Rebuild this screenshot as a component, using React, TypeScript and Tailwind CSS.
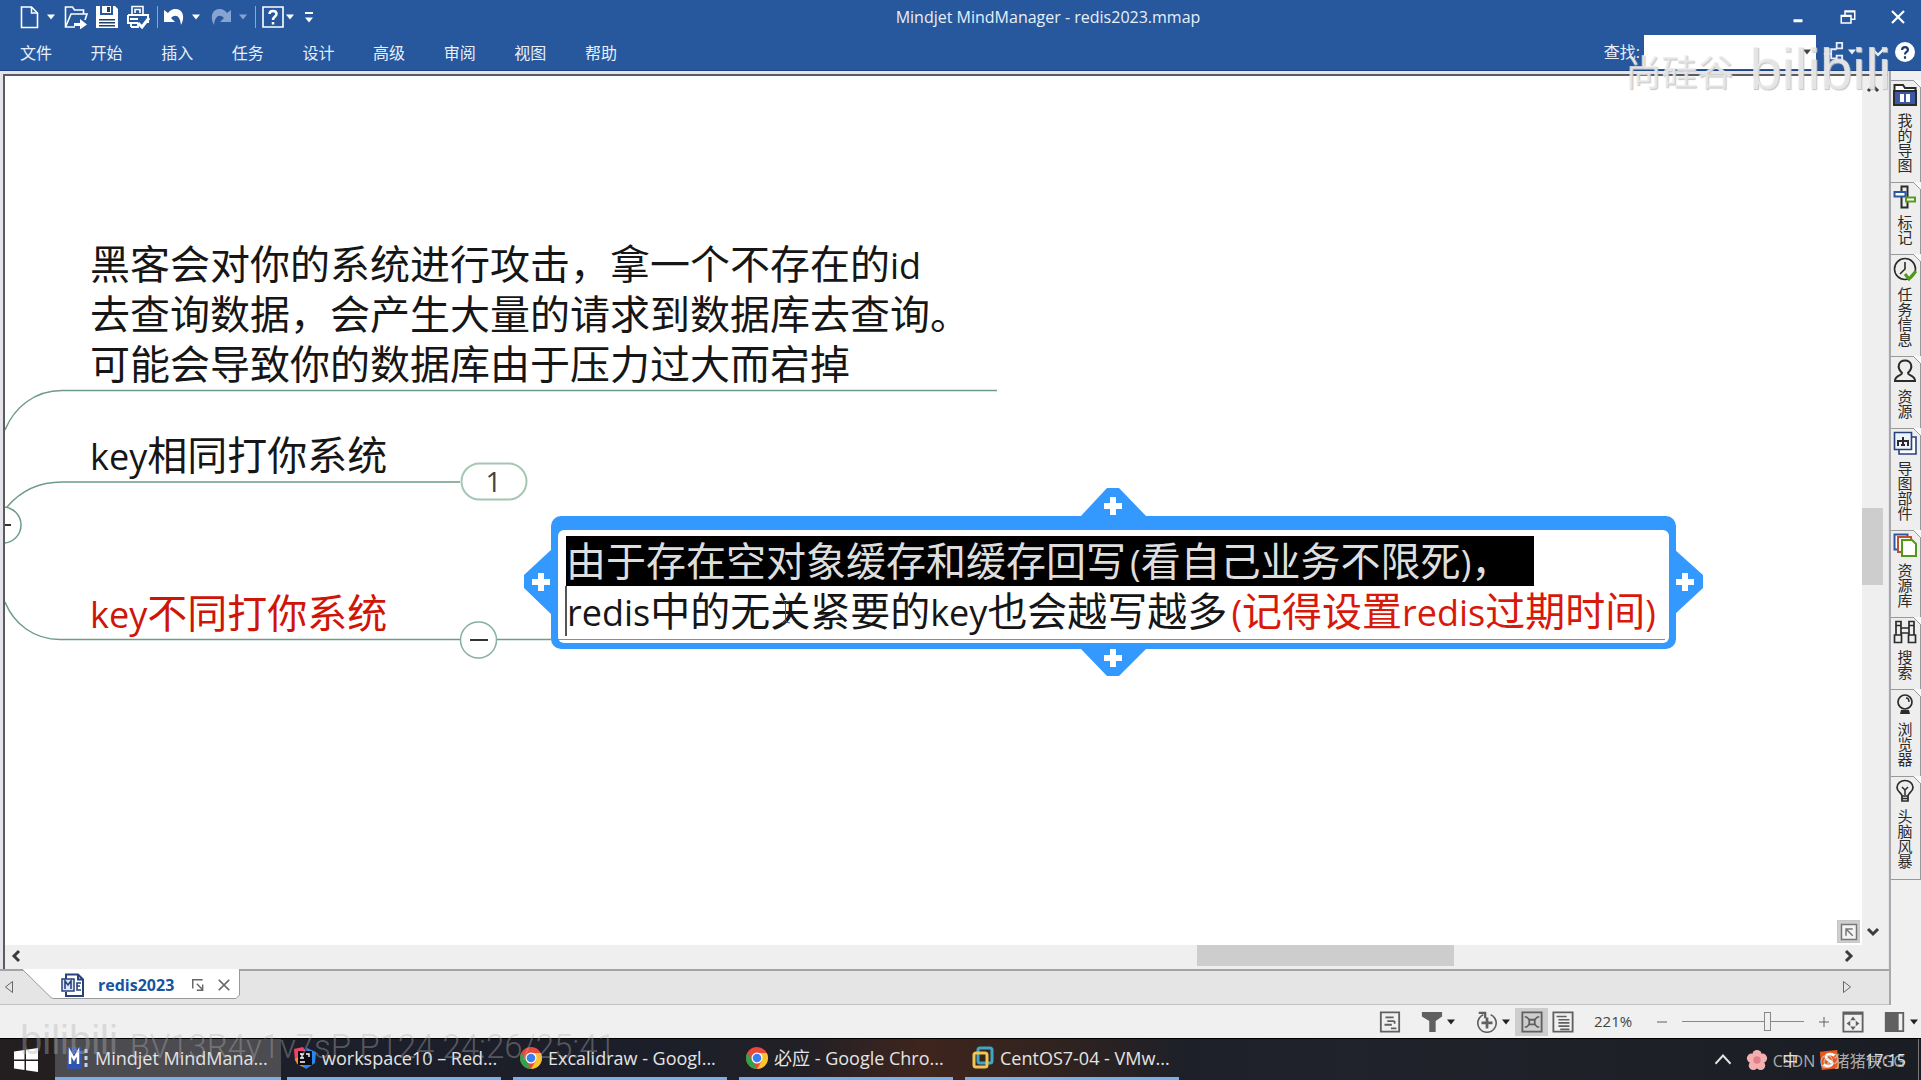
import type { ReactNode } from "react";

const MENUS = ["文件", "开始", "插入", "任务", "设计", "高级", "审阅", "视图", "帮助"];

const Svg = ({ children, size = 24, className = "" }: { children: ReactNode; size?: number; className?: string }) => (
    <svg width={size} height={size} viewBox="0 0 24 24" fill="none" stroke="currentColor" strokeWidth="2" className={className} aria-hidden="true">
        {children}
    </svg>
);

const Caret = ({ className = "" }: { className?: string }) => (
    <svg width="10" height="6" viewBox="0 0 10 6" className={className} aria-hidden="true">
        <path d="M1 0.5h8L5 5.5z" fill="currentColor" />
    </svg>
);

const Chevron = ({ d }: { d: string }) => (
    <svg width="14" height="14" viewBox="0 0 14 14" fill="none" stroke="#3c3c3c" strokeWidth="3" aria-hidden="true">
        <path d={d} />
    </svg>
);

const QuickBar = () => (
    <div className="flex w-[316px] shrink-0 items-center pl-[18px] text-white">
        <button aria-label="新建"><Svg><path d="M3.500 2h10l6 6v14.500h-16z" strokeWidth="1.600" /><path d="M13.500 2v6h6" strokeWidth="1.500" /></Svg></button>
        <button aria-label="新建选项" className="ml-1"><Caret /></button>
        <button aria-label="打开" className="ml-2">
            <Svg>
                <path d="M11 22H1.500V2h7l2 3h9v4" strokeWidth="1.600" />
                <path d="M2 21l5-12h16l-2 6" strokeWidth="1.600" />
                <path d="M10 18h6v-4l7 5.500-7 5V21h-6z" fill="currentColor" stroke="none" />
            </Svg>
        </button>
        <button aria-label="保存" className="ml-[7px]">
            <Svg>
                <path d="M1 1h19l3 3v19H1z" fill="currentColor" stroke="none" />
                <path d="M5 1h13v9H5z" fill="#27579c" stroke="none" />
                <path d="M7 1h9v7H7z" fill="currentColor" stroke="none" />
                <path d="M12 2h3v5h-3zM4 14h16v1.500H4zM4 17h16v1.500H4zM4 20h16v1.500H4z" fill="#20406f" stroke="none" />
            </Svg>
        </button>
        <button aria-label="打印" className="ml-[7px]">
            <Svg>
                <path d="M6 10V1.500h11V10M9 8V4.500h5V8" strokeWidth="1.600" />
                <path d="M2 10h20v8M2 10v8h10" />
                <path d="M4 14h8M5 22h7v-4M5 22v-4" strokeWidth="1.800" />
                <path d="M12 18l4 4 7-9" strokeWidth="3" />
            </Svg>
        </button>
        <span className="ml-[7px] h-[22px] w-px bg-[#8ba6cf]" />
        <button aria-label="撤消" className="ml-1"><Svg><path d="M2 5v12h11l-4-4c4-4 9-3 10 7 5-9 1-17-7-16-2 .3-4 1.500-6 4z" fill="currentColor" stroke="none" /></Svg></button>
        <button aria-label="撤消选项" className="ml-[5px]"><Caret /></button>
        <button aria-label="恢复" className="ml-2 text-[#86a4d2]"><Svg><path d="M22 5v12H11l4-4c-4-4-9-3-10 7-5-9-1-17 7-16 2 .3 4 1.500 6 4z" fill="currentColor" stroke="none" /></Svg></button>
        <button aria-label="恢复选项" className="ml-[5px] text-[#86a4d2]"><Caret /></button>
        <span className="ml-[7px] h-[22px] w-px bg-[#8ba6cf]" />
        <button aria-label="帮助主题" className="ml-[5px]">
            <Svg><path d="M2 2h20v20H2z" strokeWidth="1.600" /><path d="M8.500 9c0-4 7-4 7 0 0 2.500-3.500 2.500-3.500 6M12 17v2.500" strokeWidth="2.500" /></Svg>
        </button>
        <button aria-label="帮助选项"><Caret /></button>
        <button aria-label="自定义" className="ml-[9px] flex flex-col items-center gap-[3px]"><span className="h-[2px] w-2 bg-white" /><Caret /></button>
    </div>
);

const Header = () => (
    <header className="h-[71px] shrink-0 border-b border-[#1d4585] bg-[#27579c] text-[#e6effa]">
        <div className="flex h-[34px] items-center">
            <QuickBar />
            <h1 className="flex-1 text-center text-[16px] leading-5">Mindjet MindManager - redis2023.mmap</h1>
            <div className="flex w-[141px] shrink-0 items-center justify-end gap-8 pr-[14px] text-white">
                <button aria-label="最小化"><Svg size={18}><path d="M6 17h12" strokeWidth="4" /></Svg></button>
                <button aria-label="还原"><Svg size={18}><path d="M3 10h13v10H3zM8 9V4h13v11h-4M3 11h13M8 5h13" /></Svg></button>
                <button aria-label="关闭"><Svg size={18}><path d="M4 4l16 16M20 4L4 20" strokeWidth="3" /></Svg></button>
            </div>
        </div>
        <div className="flex h-[36px] items-center pr-[6px]">
            <nav className="flex w-[617px] justify-between pl-5 pt-px text-[16px]">
                {MENUS.map((m) => <button key={m} className="leading-5">{m}</button>)}
            </nav>
            <label htmlFor="find" className="ml-auto text-[16px] leading-5">查找:</label>
            <div className="relative ml-1">
                <input id="find" className="block h-[34px] w-[172px] bg-white px-2 text-black outline-none" />
                <Caret className="absolute right-1 top-[14px] text-[#444]" />
            </div>
            <button aria-label="结构" className="ml-[6px]"><Svg size={22}><path d="M2 14h8V9h6M10 14v5h6M16 2h6v6h-6zM16 16h6v6h-6z" /></Svg></button>
            <button aria-label="结构选项" className="ml-[3px]"><Caret /></button>
            <button aria-label="折叠功能区" className="ml-[14px]"><Svg size={14}><path d="M3 8l9 9 9-9" strokeWidth="4" /></Svg></button>
            <button aria-label="帮助" className="ml-[10px]">
                <Svg size={20}><circle cx="12" cy="12" r="12" fill="#fff" stroke="none" /><path d="M8.500 9.500c0-4.500 7-4.500 7 0 0 2.500-3.500 2.500-3.500 5.500M12 17v3" stroke="#1c3a6b" strokeWidth="2.600" /></Svg>
            </button>
        </div>
    </header>
);

// Latin runs are set smaller so they sit evenly beside the Chinese glyphs
const En = ({ children }: { children: ReactNode }) => <span className="text-[36px] leading-none">{children}</span>;

const plus = (x: number, y: number) => `M${x - 9} ${y}h18M${x} ${y - 9}v18`;

const MindMap = () => (
    <div className="relative min-w-0 flex-1 overflow-hidden bg-white text-[40px] leading-[50px] text-[#161616]">
        <svg className="absolute left-0 top-0 h-full w-full" aria-hidden="true">
            <g transform="translate(-5 -76)" fill="none" stroke="#6f9c86" strokeWidth="1.500">
                <path d="M5 430C14 408 34 390.500 62 390.500H997" />
                <path d="M7 507C18 494 36 482 62 482H460" />
                <path d="M5 602C14 624 34 639.500 60 639.500H551" />
                <circle cx="3" cy="525" r="18" fill="#fff" />
                <path d="M5 525h6" stroke="#333" strokeWidth="2" />
                <rect x="461.500" y="463.500" width="65" height="36" rx="18" fill="#fff" stroke="#a3c7b3" strokeWidth="2" />
                <circle cx="478.500" cy="640" r="18" fill="#fff" stroke="#86b29c" />
                <path d="M470 640h18" stroke="#333" strokeWidth="2" />
                <g fill="#3399ff" stroke="none">
                    <path d="M552 549L524 575v13l28 27z" />
                    <path d="M1674 549l29 26v13l-29 27z" />
                    <path d="M1080 517l27-29h12l28 29z" />
                    <path d="M1080 648l27 28h12l28-28z" />
                </g>
                <path d={`${plus(541, 582)}${plus(1685, 582)}${plus(1113, 506)}${plus(1113, 658)}`} stroke="#fff" strokeWidth="6" />
            </g>
        </svg>
        <p className="absolute left-[85px] top-[163px] whitespace-nowrap">
            黑客会对你的系统进行攻击，拿一个不存在的<En>id</En><br />
            去查询数据，会产生大量的请求到数据库去查询。<br />
            可能会导致你的数据库由于压力过大而宕掉
        </p>
        <p className="absolute left-[85px] top-[354px] whitespace-nowrap"><En>key</En>相同打你系统</p>
        <button className="absolute left-[456px] top-[386px] h-[37px] w-[65px] text-center text-[28px] leading-9 text-[#444]">1</button>
        <p className="absolute left-[85px] top-[512px] whitespace-nowrap text-[#cf1507]"><En>key</En>不同打你系统</p>
        <div className="absolute left-[546px] top-[440px] h-[133px] w-[1125px] rounded-[10px] bg-[#3399ff] px-[7px] pb-[6px] pt-[14px]">
            <div className="flex h-full flex-col rounded-[6px] bg-white pl-2 pt-[6px]">
                <p className="h-[50px] w-[968px] whitespace-nowrap bg-black text-[#dedede]">由于存在空对象缓存和缓存回写<span className="ml-1"><En>(</En>看自己业务不限死<En>)</En></span>，</p>
                <p className="-ml-px whitespace-nowrap border-l-2 border-[#555]">
                    <En>redis</En>中的无关紧要的<En>key</En>也会越写越多<span className="ml-1 text-[#d8190a]"><En>(</En>记得设置<En>redis</En>过期时间<En>)</En></span>
                </p>
                <div className="-ml-2 mr-1 mt-[3px] h-px bg-[#6f9c86]" />
            </div>
        </div>
        <svg className="absolute left-[775px] top-[524px]" width="11" height="24" fill="none" stroke="#555" aria-hidden="true">
            <path d="M1 1q4 0 4.500 3q.5-3 4.500-3M5.500 4v16M1 23q4 0 4.500-3q.5 3 4.500 3" />
        </svg>
        <button aria-label="定位" className="absolute bottom-[2px] right-[2px] flex h-[23px] w-[23px] items-center justify-center border border-[#c8c8c8] bg-[#cfcfcf] text-[#777]">
            <Svg size={18}><path d="M2 2h20v20H2z" fill="#f4f4f4" /><path d="M8 17V8h9M8 8l9 9" /></Svg>
        </button>
    </div>
);

const Workspace = () => (
    <div className="flex flex-1 flex-col bg-[#e4e4ea] pl-[3px] pr-px pt-[3px]">
        <div className="flex flex-1 flex-col border-l-2 border-t-2 border-[#5c5c5c] bg-[#efefef]">
            <div className="flex flex-1">
                <MindMap />
                <div className="mr-[5px] flex w-[21px] shrink-0 flex-col items-center">
                    <button aria-label="向上滚动" className="flex h-6 items-center"><Chevron d="M2 10l5-5 5 5" /></button>
                    <div className="flex-[408]" />
                    <div className="w-full flex-[77] bg-[#cdcdcd]" />
                    <div className="flex-[334]" />
                    <button aria-label="向下滚动" className="flex h-[26px] items-center"><Chevron d="M2 4l5 5 5-5" /></button>
                </div>
            </div>
            <div className="flex h-6 items-start pr-7">
                <button aria-label="向左滚动" className="flex h-[21px] w-6 items-center justify-center"><Chevron d="M9 2L4 7l5 5" /></button>
                <div className="flex-[1168]" />
                <div className="h-[21px] flex-[257] bg-[#cdcdcd]" />
                <div className="flex-[382]" />
                <button aria-label="向右滚动" className="flex h-[21px] w-6 items-center justify-center"><Chevron d="M5 2l5 5-5 5" /></button>
            </div>
        </div>
    </div>
);

const DocTabs = () => (
    <div className="flex h-[36px] shrink-0 items-start border-b border-t-2 border-b-[#c2c2c2] border-t-[#a4a4a4] bg-[#e5e5e5]">
        <button aria-label="上一个标签" className="mt-[9px] ml-1"><svg width="10" height="14" fill="none" stroke="#666"><path d="M8.500 1.500v11L1.500 7z" /></svg></button>
        <div className="relative -mt-[2px] ml-2 flex h-[31px] w-[219px] items-center pl-[39px]">
            <svg className="absolute left-0 top-0" width="219" height="31" aria-hidden="true">
                <path d="M0 0L29 28.500Q30 29.500 32 29.500H214L217.500 26V0" fill="#fff" stroke="#999" />
            </svg>
            <Svg className="relative text-[#27417f]">
                <path d="M5 6V1.500h12l5 5V23H5v-4M17 1.500v5h5" />
                <path d="M1 6h12v12H1z" fill="#dfe6f5" strokeWidth="1.500" />
                <path d="M4 16V8l3 4 3-4v8M20 10h-4v7h4M16 13h3" strokeWidth="1.600" />
            </Svg>
            <button className="relative ml-[13px] text-[16px] font-bold leading-5 text-[#17559f]">redis2023</button>
            <div className="relative ml-auto flex gap-3 pr-[10px] text-[#666]">
                <button aria-label="还原文档"><Svg size={14}><path d="M3 18V3h17M10 10l10 10M20 11v10H10" strokeWidth="2.500" /></Svg></button>
                <button aria-label="关闭文档"><Svg size={14}><path d="M3 3l18 18M21 3L3 21" strokeWidth="3" /></Svg></button>
            </div>
        </div>
        <button aria-label="下一个标签" className="ml-auto mr-[37px] mt-[9px]"><svg width="10" height="14" fill="none" stroke="#666"><path d="M1.500 1.500v11L8.500 7z" /></svg></button>
    </div>
);

const SIDE_TABS: { label: string; height: string; icon: ReactNode }[] = [
    {
        label: "我的导图", height: "h-[102px]",
        icon: <><path d="M1.500 22V2H10l2 3h10.500v17z" fill="#fff" /><path d="M1 8h22v14H1z" fill="#3c57a4" /><path d="M7 11h4v8H7zM13 11h4v8h-4z" fill="#fff" stroke="none" /></>,
    },
    {
        label: "标记", height: "h-[72px]",
        icon: <><path d="M8.500 1.500h6v21h-6z" /><path d="M1.500 7h11v4.500h-11z" fill="#fff" stroke="#2b57a5" /><path d="M13 12.500h9v4h-9z" fill="#fff" stroke="#5b9a1f" /></>,
    },
    {
        label: "任务信息", height: "h-[102px]",
        icon: <><circle cx="12" cy="12" r="10.500" strokeWidth="1.600" /><path d="M12 5v7l-5 5" strokeWidth="1.600" /><path d="M12 17l4 5 7-8" stroke="#4f9a17" strokeWidth="3" /></>,
    },
    {
        label: "资源", height: "h-[72px]",
        icon: <path d="M9 14c-6-6-3-12.500 3-12.500S21 8 15 14c0 3 7 2 7 8H2c0-6 7-5 7-8z" />,
    },
    {
        label: "导图部件", height: "h-[102px]",
        icon: <><path d="M6 6h17v17H6z" fill="#fff" stroke="#27417f" strokeWidth="1.600" /><path d="M1.500 1.500h17v17h-17z" fill="#eef2fa" stroke="#27417f" strokeWidth="1.600" /><path d="M5 14v-4h10v4M10 6v8M8 14h4M4 14h2M14 14h2" /></>,
    },
    {
        label: "资源库", height: "h-[87px]",
        icon: <><path d="M1.500 1.500h13v15h-13z" fill="#fff" stroke="#2b57a5" /><path d="M5 4h13v15H5z" fill="#fff" stroke="#c0502b" /><path d="M9 7h10l4 4v12H9z" fill="#fff" stroke="#4f9a17" /></>,
    },
    {
        label: "搜索", height: "h-[72px]",
        icon: <path d="M3 1.500h5v4H3zM16 1.500h5v4h-5zM3 6v9M8 6v9M16 6v9M21 6v9M8 8h8M8 13h8M1.500 15h7v7.500h-7zM15.500 15h7v7.500h-7z" strokeWidth="1.700" />,
    },
    {
        label: "浏览器", height: "h-[87px]",
        icon: <><circle cx="12" cy="10" r="7" strokeWidth="1.700" /><path d="M13 6c2 0 3 2 3 4" strokeWidth="1.500" /><path d="M8 18h8l1 4H7z" fill="currentColor" stroke="none" /></>,
    },
    {
        label: "头脑风暴", height: "h-[103px]",
        icon: <><path d="M9 17c0-3-5-4-5-8.500C4 4 8 1.500 12 1.500S20 4 20 8.500C20 13 15 14 15 17zM9 17v5h6v-5" strokeWidth="1.700" /><path d="M12 16v-5L9 8M12 11l3-3M9 19.500h6" strokeWidth="1.500" /></>,
    },
];

const SideTabs = () => (
    <aside className="w-8 shrink-0 border-l-2 border-[#a8a8a8] bg-[#f0f0f0] pt-[9px]">
        <div className="border-t border-[#999]">
            {SIDE_TABS.map((tab) => (
                <button key={tab.label} className={`relative flex w-full flex-col items-center border-b border-r border-[#999] bg-[#eeeeee] pr-[2px] pt-[2px] text-[#2b2b2b] ${tab.height}`}>
                    <Svg>{tab.icon}</Svg>
                    <span className="mt-[6px] text-[15px] leading-4 [writing-mode:vertical-rl]">{tab.label}</span>
                    <svg className="absolute -right-px -top-px" width="8" height="8" aria-hidden="true">
                        <path d="M0 0H8V8z" fill="#f8f8f8" /><path d="M0 0L8 8" stroke="#999" />
                    </svg>
                </button>
            ))}
        </div>
    </aside>
);

const StatusBar = () => (
    <div className="flex h-[33px] shrink-0 items-center justify-end bg-[#f0f0f0] pr-[2px] text-[#606060]">
        <button aria-label="备注"><Svg size={22}><path d="M2 1.500h20v21H2z" /><path d="M7 7h9M9 11h8M17 11v3M6 15h8M13 19h6" /></Svg></button>
        <button aria-label="筛选" className="ml-[20px]"><Svg size={22}><path d="M1 1h22v5l-7 5v12H9V11L1 6z" fill="currentColor" stroke="none" /></Svg></button>
        <button aria-label="筛选选项" className="ml-[3px] text-[#222]"><Caret /></button>
        <button aria-label="展开级别" className="ml-[20px]"><Svg size={22}><path d="M8 4a10 10 0 1 0 8 0" strokeWidth="1.800" /><path d="M12 7v12M6 13h12" strokeWidth="3" /><path d="M3 2h7v6" strokeWidth="2.500" /></Svg></button>
        <button aria-label="展开选项" className="ml-[3px] text-[#222]"><Caret /></button>
        <button aria-label="导图视图" className="ml-1 flex h-[28px] w-[33px] items-center justify-center bg-[#cdcdcd]">
            <Svg size={22}><path d="M1.500 1.500h21v21h-21z" /><path d="M9 9.500h6v5H9z" /><path d="M4 6.500h2l3 3M4 17.500h2l3-3M20 6.500h-2l-3 3M20 17.500h-2l-3-3" strokeWidth="1.800" /></Svg>
        </button>
        <button aria-label="大纲视图" className="ml-[4px]"><Svg size={22}><path d="M1.500 1.500h21v21h-21z" /><path d="M5 6h11M7 9.500h12M7 13h12M7 16.500h12M9 20h10" strokeWidth="1.800" /></Svg></button>
        <span className="ml-[20px] w-[42px] text-[15px] text-[#444]">221%</span>
        <button aria-label="缩小" className="ml-[20px]"><Svg size={12}><path d="M2 12h20" /></Svg></button>
        <input
            type="range" aria-label="缩放" min={0} max={100} defaultValue={71}
            className="ml-[14px] h-5 w-[122px] appearance-none bg-transparent [&::-webkit-slider-runnable-track]:h-px [&::-webkit-slider-runnable-track]:bg-[#888] [&::-webkit-slider-thumb]:-mt-[9px] [&::-webkit-slider-thumb]:h-[19px] [&::-webkit-slider-thumb]:w-[7px] [&::-webkit-slider-thumb]:appearance-none [&::-webkit-slider-thumb]:border [&::-webkit-slider-thumb]:border-[#888] [&::-webkit-slider-thumb]:bg-[#f0f0f0]"
        />
        <button aria-label="放大" className="ml-[14px]"><Svg size={12}><path d="M2 12h20M12 2v20" /></Svg></button>
        <button aria-label="适合窗口" className="ml-[12px]"><Svg size={22}><path d="M1.500 1.500h21v21h-21zM1.500 3h21" /><path d="M12 6l3 4H9zM12 21l3-4H9zM5 13.500l4-3v6zM19 13.500l-4-3v6z" fill="currentColor" stroke="none" /></Svg></button>
        <button aria-label="任务窗格" className="ml-[20px]"><Svg size={22}><path d="M2 2h19v20H2z" /><path d="M2 2h13v20H2z" fill="currentColor" /></Svg></button>
        <button aria-label="窗格选项" className="ml-[3px] text-[#222]"><Caret /></button>
    </div>
);

const Chrome = () => (
    <Svg>
        <g stroke="none">
            <circle cx="12" cy="12" r="11" fill="#e8493a" />
            <path d="M2.500 6.500L8 16l4 7A11 11 0 0 1 2.500 6.500z" fill="#2fa24c" />
            <path d="M12 23l5-8.500L21.800 7A11 11 0 0 1 12 23z" fill="#fbc62c" />
            <path d="M12 7h9.800L17 15z" fill="#fbc62c" />
            <circle cx="12" cy="12" r="5.500" fill="#fff" />
            <circle cx="12" cy="12" r="4.300" fill="#3a7ff0" />
        </g>
    </Svg>
);

const TASKS: { title: string; icon: ReactNode }[] = [
    {
        title: "Mindjet MindMana...",
        icon: <Svg><path d="M1 1h15v22H1z" fill="#3054b0" stroke="none" /><path d="M4 18V6l4 7 4-7v12" stroke="#fff" strokeWidth="2.500" /><path d="M20 3v4M20 10v4M20 17v4" stroke="#c4d4f6" strokeWidth="3" /></Svg>,
    },
    {
        title: "workspace10 – Red...",
        icon: (
            <Svg>
                <g stroke="none">
                    <path d="M1 3l9-2 4 7-6 9-6-2z" fill="#f2416b" /><path d="M2 13l5-3 5 12-8-4z" fill="#f58a35" />
                    <path d="M14 2l9 4-1 11-9 6-4-4z" fill="#2a86ee" /><path d="M5 5h14v14H5z" fill="#0c0c10" />
                </g>
                <path d="M7 8h4M9 8v4M7 12h4M13 8h3v3M7 16h5" stroke="#fff" strokeWidth="1.400" />
            </Svg>
        ),
    },
    { title: "Excalidraw - Googl...", icon: <Chrome /> },
    { title: "必应 - Google Chro...", icon: <Chrome /> },
    {
        title: "CentOS7-04 - VMw...",
        icon: <Svg><rect x="7" y="2" width="14" height="15" rx="2" stroke="#3fa6c4" strokeWidth="3" /><rect x="3" y="7" width="13" height="14" rx="2" stroke="#f0c552" strokeWidth="3" /></Svg>,
    },
];

const Taskbar = () => (
    <footer className="flex h-[42px] shrink-0 border-t border-black bg-[linear-gradient(90deg,#1d1f2a_0%,#1c1f29_35%,#222026_42%,#3f251d_48%,#30231f_55%,#1d2029_62%,#20232b_70%,#1b1d24_100%)] text-[18px] text-[#e4e4e4]">
        <button aria-label="开始菜单" className="flex w-[55px] shrink-0 items-center justify-center bg-[#231e20] pr-1">
            <Svg><path d="M0 3.500L10.500 2v9.500H0zM12 1.800L24 0v11.500H12zM0 13h10.500v9L0 20.500zM12 13h12v11l-12-1.800z" fill="#fff" stroke="none" /></Svg>
        </button>
        {TASKS.map((t, i) => (
            <button key={t.title} className={i === 0 ? "w-[226px] bg-[#4b4b50]" : "w-[226px] px-[6px]"}>
                <span className={`flex h-full items-center gap-[5px] whitespace-nowrap border-b-[3px] border-[#76b0ea] ${i === 0 ? "pl-[11px]" : "pl-[6px]"}`}>
                    {t.icon}
                    <span className="leading-6">{t.title}</span>
                </span>
            </button>
        ))}
        <div className="ml-auto mr-[2px] flex items-center border-r border-[#777] pr-[12px]">
            <button aria-label="显示隐藏的图标"><Svg size={18}><path d="M2 17l10-11 10 11" strokeWidth="2.500" /></Svg></button>
            <span className="ml-[14px]">
                <Svg size={22}>
                    <g fill="#f4b0ae" stroke="none">
                        <circle cx="12" cy="6" r="5" /><circle cx="6" cy="10" r="5" /><circle cx="18" cy="10" r="5" /><circle cx="8" cy="18" r="5" /><circle cx="16" cy="18" r="5" />
                        <circle cx="12" cy="12" r="4" fill="#e0808a" />
                    </g>
                </Svg>
            </span>
            <span className="ml-[14px] text-[16px]">中</span>
            <span className="ml-[20px]">
                <Svg size={22}><path d="M2 3l19-2 2 20-19 2z" fill="#e8581c" stroke="none" /><path d="M18 7c-6-3-12 0-8 4s7 3 5 6-8 1-9 0" stroke="#fff" strokeWidth="3" /></Svg>
            </span>
            <time className="ml-[25px] text-[16px]">17:15</time>
        </div>
    </footer>
);

const Watermarks = () => (
    <div className="pointer-events-none">
        <div className="absolute right-[30px] top-[36px] flex items-center gap-[16px] text-[#ececec]/80 [text-shadow:1px_1px_1px_#c4c4c4]">
            <span className="pt-2 text-[36px] leading-[58px]">尚硅谷</span>
            <span className="font-[Liberation_Sans] text-[58px] leading-[58px]">bilibili</span>
        </div>
        <div className="absolute bottom-[15px] left-[20px] flex items-end gap-[12px] text-[#b4b4b4]/40">
            <span className="font-[Liberation_Sans] text-[40px] leading-[50px]">bilibili</span>
            <span className="font-[Roboto] text-[33px] font-light leading-[36px]">BV13R4y1v7sP P124 24:26/25:41</span>
        </div>
        <span className="absolute bottom-[9px] right-[16px] text-[16px] leading-5 text-[#d0d0d0]/80">CSDN @猪猪侠GG</span>
    </div>
);

export default function App() {
    return (
        <div className="relative flex min-h-screen flex-col overflow-hidden bg-[#f0f0f0] font-['Open_Sans','Noto_Sans_CJK_SC',sans-serif]">
            <Header />
            <main className="flex flex-1">
                <div className="flex min-w-0 flex-1 flex-col">
                    <Workspace />
                    <DocTabs />
                </div>
                <SideTabs />
            </main>
            <StatusBar />
            <Taskbar />
            <Watermarks />
        </div>
    );
}
